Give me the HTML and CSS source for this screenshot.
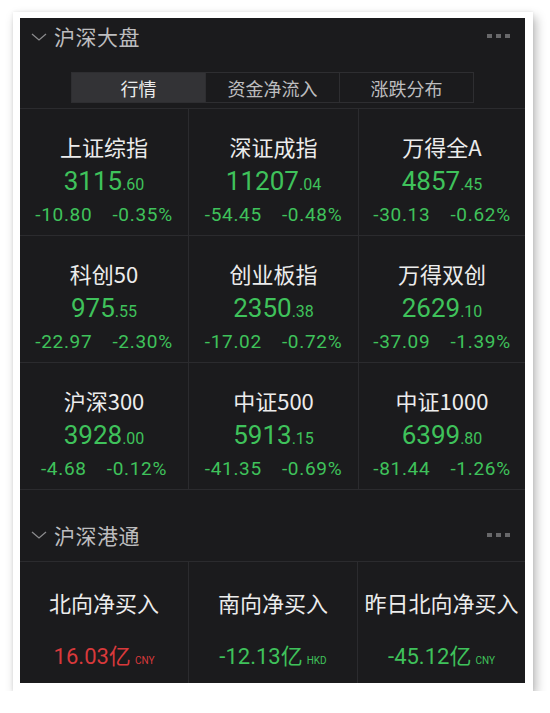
FILE: index.html
```html
<!DOCTYPE html>
<html lang="zh-CN">
<head>
  <meta charset="UTF-8" />
  <meta name="viewport" content="width=device-width, initial-scale=1.0"/>
  <title>沪深大盘</title>
  <link rel="stylesheet" href="styles.css">
</head>
<body>
  <div class="photo">
    <div class="panel">

      <div class="section-head">
        <svg class="chevron" width="16" height="8" viewBox="0 0 16 8"><path d="M1 1 L8 7 L15 1" fill="none" stroke="#8a8a8c" stroke-width="1.3"/></svg>
        <span class="section-title">沪深大盘</span>
        <span class="dots"><i></i><i></i><i></i></span>
      </div>

      <div class="tabs">
        <div class="tab active">行情</div>
        <div class="tab">资金净流入</div>
        <div class="tab">涨跌分布</div>
      </div>

      <div class="index-grid">
        <div class="cell">
          <div class="name">上证综指</div>
          <div class="price">3115<small>.60</small></div>
          <div class="change"><span>-10.80</span><span>-0.35%</span></div>
        </div>
        <div class="cell">
          <div class="name">深证成指</div>
          <div class="price">11207<small>.04</small></div>
          <div class="change"><span>-54.45</span><span>-0.48%</span></div>
        </div>
        <div class="cell">
          <div class="name">万得全A</div>
          <div class="price">4857<small>.45</small></div>
          <div class="change"><span>-30.13</span><span>-0.62%</span></div>
        </div>

        <div class="cell">
          <div class="name">科创50</div>
          <div class="price">975<small>.55</small></div>
          <div class="change"><span>-22.97</span><span>-2.30%</span></div>
        </div>
        <div class="cell">
          <div class="name">创业板指</div>
          <div class="price">2350<small>.38</small></div>
          <div class="change"><span>-17.02</span><span>-0.72%</span></div>
        </div>
        <div class="cell">
          <div class="name">万得双创</div>
          <div class="price">2629<small>.10</small></div>
          <div class="change"><span>-37.09</span><span>-1.39%</span></div>
        </div>

        <div class="cell">
          <div class="name">沪深300</div>
          <div class="price">3928<small>.00</small></div>
          <div class="change"><span>-4.68</span><span>-0.12%</span></div>
        </div>
        <div class="cell">
          <div class="name">中证500</div>
          <div class="price">5913<small>.15</small></div>
          <div class="change"><span>-41.35</span><span>-0.69%</span></div>
        </div>
        <div class="cell">
          <div class="name">中证1000</div>
          <div class="price">6399<small>.80</small></div>
          <div class="change"><span>-81.44</span><span>-1.26%</span></div>
        </div>
      </div>

      <div class="section-head second">
        <svg class="chevron" width="16" height="8" viewBox="0 0 16 8"><path d="M1 1 L8 7 L15 1" fill="none" stroke="#8a8a8c" stroke-width="1.3"/></svg>
        <span class="section-title">沪深港通</span>
        <span class="dots"><i></i><i></i><i></i></span>
      </div>

      <div class="flow-grid">
        <div class="flow-cell">
          <div class="flow-name">北向净买入</div>
          <div class="flow-value up">16.03亿<small>CNY</small></div>
        </div>
        <div class="flow-cell">
          <div class="flow-name">南向净买入</div>
          <div class="flow-value">-12.13亿<small>HKD</small></div>
        </div>
        <div class="flow-cell">
          <div class="flow-name">昨日北向净买入</div>
          <div class="flow-value">-45.12亿<small>CNY</small></div>
        </div>
      </div>

    </div>
  </div>
</body>
</html>
```

FILE: styles.css
```css
:root {
  --panel: #1b1b1d;
  --line: #2b2b2e;
  --green: #3fc25b;
  --red: #d8393b;
  --text: #ececec;
  --muted: #bdbdbf;
  --num-font: Roboto, "Noto Sans CJK SC", sans-serif;
}

* {
  box-sizing: border-box;
}

body {
  margin: 0;
  padding: 12px 0 0 13px;
  background: #fff;
  font-family: "Noto Sans CJK SC", "Noto Sans", sans-serif;
}

.photo {
  width: 520px;
  padding: 6px 8px 8px 7px;
  background: #fff;
  box-shadow: 3px 5px 10px rgba(0, 0, 0, 0.28), 0 0 3px rgba(0, 0, 0, 0.08);
}

.panel {
  height: 665px;
  background: var(--panel);
  overflow: hidden;
}

/* section header */
.section-head {
  display: flex;
  align-items: center;
  height: 36px;
  padding: 0 15px 0 11px;
}

.section-head.second {
  height: 72px;
  padding-top: 18px;
  border-bottom: 1px solid var(--line);
}

.chevron {
  margin-right: 7px;
  margin-top: 1px;
}

.section-title {
  font-size: 21px;
  color: var(--muted);
  letter-spacing: 0.5px;
}

.dots {
  margin-left: auto;
  display: flex;
  gap: 4px;
}

.dots i {
  width: 5px;
  height: 4px;
  background: #68686a;
}

/* tabs */
.tabs {
  display: flex;
  width: 403px;
  height: 31px;
  margin: 18px auto 0;
  border: 1px solid #2e2e31;
}

.tab {
  flex: 1;
  display: flex;
  align-items: center;
  justify-content: center;
  font-size: 18px;
  color: var(--muted);
  border-left: 1px solid #2e2e31;
}

.tab:first-child {
  border-left: none;
}

.tab.active {
  background: #333336;
  color: var(--text);
}

/* index grid */
.index-grid {
  display: grid;
  grid-template-columns: 169px 170px 1fr;
  grid-template-rows: repeat(3, 127px);
  margin-top: 5px;
  border-top: 1px solid var(--line);
}

.cell {
  display: flex;
  flex-direction: column;
  align-items: center;
  padding-top: 23px;
  border-right: 1px solid var(--line);
  border-bottom: 1px solid var(--line);
}

.cell:nth-child(3n) {
  border-right: none;
}

.name {
  font-size: 22px;
  line-height: 28px;
  color: var(--text);
}

.price {
  margin-top: 6px;
  font-family: var(--num-font);
  font-size: 26px;
  line-height: 30px;
  color: var(--green);
}

.price small {
  font-size: 16px;
}

.change {
  display: flex;
  gap: 20px;
  margin-top: 3px;
  font-family: var(--num-font);
  font-size: 19px;
  line-height: 24px;
  letter-spacing: 0.7px;
  color: var(--green);
}

/* connect flows */
.flow-grid {
  display: grid;
  grid-template-columns: 169px 169px 1fr;
  height: 121px;
}

.flow-cell {
  display: flex;
  flex-direction: column;
  align-items: center;
  padding-top: 25px;
  border-right: 1px solid var(--line);
}

.flow-cell:last-child {
  border-right: none;
}

.flow-name {
  font-size: 22px;
  line-height: 30px;
  color: var(--text);
  white-space: nowrap;
}

.flow-value {
  margin-top: 25px;
  font-family: var(--num-font);
  font-size: 22px;
  line-height: 30px;
  color: var(--green);
}

.flow-value.up {
  color: var(--red);
}

.flow-value small {
  margin-left: 4px;
  font-size: 10px;
}
```
